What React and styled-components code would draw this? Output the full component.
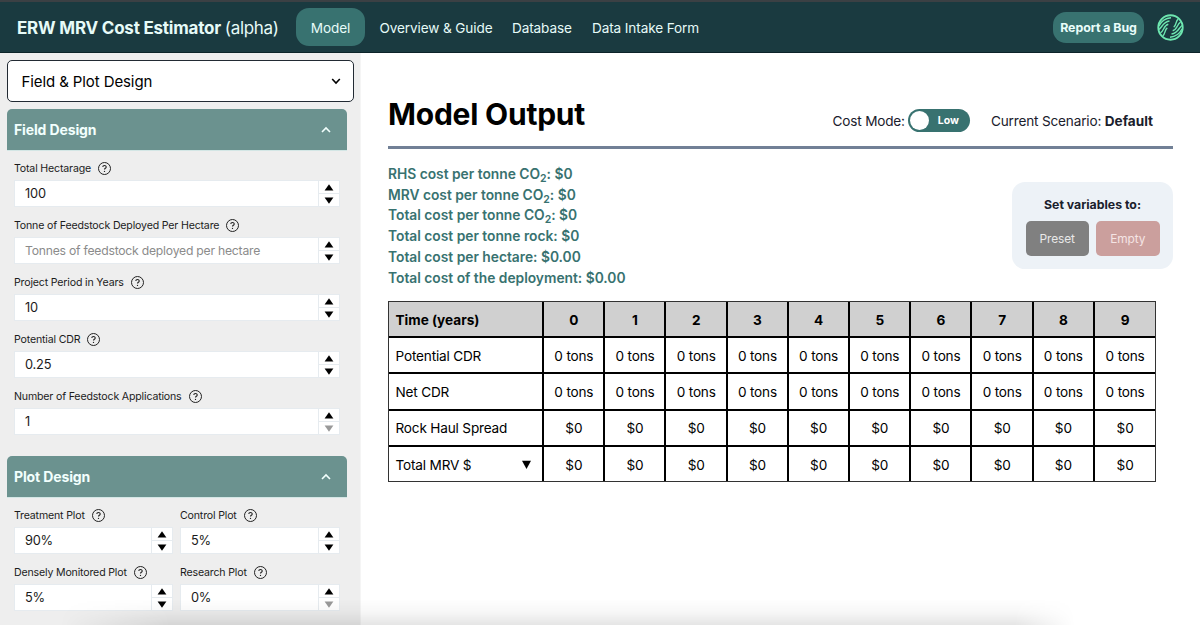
import React from "react";
import styled, { createGlobalStyle } from "styled-components";

const Global = createGlobalStyle`
  *, *::before, *::after { box-sizing: border-box; }
  html, body { margin: 0; padding: 0; }
  body { font-family: Inter, "Liberation Sans", sans-serif; background: #fff; color: #000; overflow: hidden; }
  button, input { font: inherit; letter-spacing: inherit; }
`;

const Page = styled.div`
  position: relative;
  width: 1200px;
  height: 625px;
  overflow: hidden;
  display: flex;
  flex-direction: column;
`;

const Header = styled.header`
  flex: none;
  height: 53px;
  display: flex;
  align-items: center;
  padding: 0 16px 0 17px;
  background: #1a3a40;
  border-top: 2px solid #3b4044;
  border-bottom: 1px solid #0c2429;
  color: #e6fbf8;
`;

const Brand = styled.h1`
  margin: 0 18px 0 0;
  padding-top: 2px;
  width: 261px;
  white-space: nowrap;
  font-size: 17px;
  font-weight: 700;
  letter-spacing: -0.22px;
  span { font-weight: 400; letter-spacing: -0.3px; }
`;

const Nav = styled.nav`
  flex: 1;
  display: flex;
  align-items: center;
`;

const NavLink = styled.a`
  white-space: nowrap;
  font-size: 13.6px;
  line-height: 18px;
  padding-top: 2px;
  letter-spacing: -0.12px;
  width: ${(p) => p.$w}px;
  margin-right: ${(p) => p.$gap}px;
  ${(p) => p.$active && `
    height: 38px;
    display: flex;
    align-items: center;
    justify-content: center;
    border-radius: 13px;
    background: #387270;
  `}
`;

const BugButton = styled.button`
  width: 91px;
  height: 31px;
  padding: 0;
  margin-right: 13px;
  border: 0;
  border-radius: 13px;
  background: #387270;
  color: #e9fdfa;
  font-size: 12.4px;
  font-weight: 700;
  letter-spacing: -0.06px;
  white-space: nowrap;
`;

const Body = styled.div`
  flex: 1;
  display: flex;
  min-height: 0;
`;

const Sidebar = styled.aside`
  flex: none;
  width: 361px;
  padding: 7px 14px 0 7px;
  background: #eee;
  border-right: 1px solid #f5f5f5;
`;

const SectionSelect = styled.div`
  width: 347px;
  height: 42px;
  display: flex;
  align-items: center;
  justify-content: space-between;
  padding: 0 12px 0 13.5px;
  border: 1.5px solid #222a33;
  border-radius: 5px;
  background: #fff;
  font-size: 15px;
  letter-spacing: -0.1px;
`;

const Panel = styled.section`
  width: 340px;
  margin-top: ${(p) => p.$top}px;
`;

const PanelHead = styled.div`
  height: 41px;
  display: flex;
  align-items: center;
  justify-content: space-between;
  padding: 0 16px 0 7px;
  border-radius: 5px 5px 0 0;
  background: #6b928f;
  color: #f2fffd;
  font-size: 14px;
  font-weight: 700;
  letter-spacing: -0.13px;
  box-shadow: 0 1px 0 #d3e6e5;
`;

const Fields = styled.div`
  display: grid;
  grid-template-columns: ${(p) => (p.$two ? "159px 160px" : "326px")};
  column-gap: 7px;
  row-gap: 10px;
  padding: 10px 0 0 7px;
`;

const Field = styled.div`
  height: 47px;
`;

const Label = styled.div`
  height: 17px;
  display: flex;
  align-items: center;
  gap: 7px;
  white-space: nowrap;
  font-size: 10.6px;
  line-height: 16px;
  letter-spacing: -0.17px;
  color: #1c1c1c;
  margin-bottom: 3px;
`;

const NumberBox = styled.div`
  height: 27px;
  display: flex;
  border: 1px solid #e6ebef;
  background: #fff;
`;

const Value = styled.div`
  flex: 1;
  display: flex;
  align-items: center;
  padding: 1px 0 0 10px;
  white-space: nowrap;
  line-height: 16px;
  font-size: ${(p) => (p.$hint ? 12.2 : 12.8)}px;
  letter-spacing: ${(p) => (p.$hint ? -0.23 : -0.2)}px;
  color: ${(p) => (p.$hint ? "#8b8b8b" : "#1a1a1a")};
`;

const Stepper = styled.div`
  width: 21px;
  display: flex;
  flex-direction: column;
  border-left: 1px solid #e6ebef;
`;

const Step = styled.div`
  flex: 1;
  display: flex;
  align-items: center;
  justify-content: center;
  color: ${(p) => (p.$off ? "#999" : "#000")};
  & + & { border-top: 1px solid #e6ebef; }
`;

const Main = styled.main`
  flex: 1;
  padding: 38px 27px 0;
`;

const TitleRow = styled.div`
  width: 785px;
  height: 58px;
  display: flex;
  align-items: flex-start;
  border-bottom: 3px solid #718096;
  color: #1a202c;
`;

const Title = styled.h2`
  margin: 0;
  width: 444.5px;
  padding-top: 5px;
  font-size: 30px;
  line-height: 36px;
  font-weight: 700;
  letter-spacing: -0.22px;
  color: #000;
`;

const TopText = styled.div`
  padding-top: 20px;
  font-size: 13.6px;
  line-height: 20px;
  white-space: nowrap;
  width: ${(p) => p.$w}px;
  letter-spacing: -0.18px;
  b { letter-spacing: 0; }
`;

const Toggle = styled.div`
  width: 62px;
  height: 23px;
  margin: 18px 21px 0 0;
  padding: 0 11px 0 2px;
  display: flex;
  align-items: center;
  justify-content: space-between;
  border-radius: 12px;
  background: #387270;
  color: #fff;
  font-size: 10.5px;
  font-weight: 700;
  &::before {
    content: "";
    width: 19px;
    height: 19px;
    border-radius: 50%;
    background: #fff;
  }
`;

const Summary = styled.div`
  width: 785px;
  height: 152px;
  display: flex;
  justify-content: space-between;
`;

const Costs = styled.div`
  padding-top: 14.75px;
  color: #387270;
  font-size: 13.8px;
  font-weight: 600;
  letter-spacing: -0.01px;
`;

const Cost = styled.div`
  height: 20.75px;
  line-height: 20.75px;
  white-space: nowrap;
  sub { font-size: 10.5px; line-height: 0; vertical-align: -2.5px; }
`;

const Presets = styled.div`
  width: 161px;
  height: 87px;
  margin-top: 33px;
  padding-top: 14px;
  border-radius: 13px;
  background: #edf2f7;
  text-align: center;
  font-size: 12.3px;
  line-height: 18px;
  font-weight: 700;
  color: #1a202c;
`;

const PresetButtons = styled.div`
  display: flex;
  justify-content: center;
  gap: 7px;
  margin-top: 7px;
`;

const PresetButton = styled.button`
  width: 63.5px;
  height: 35px;
  padding: 0;
  border: 0;
  border-radius: 5px;
  background: ${(p) => p.$bg};
  color: ${(p) => p.$fg};
  font-size: 11.9px;
  font-weight: 400;
  letter-spacing: -0.1px;
`;

const Table = styled.div`
  width: 768px;
  border: 1px solid #333;
  display: grid;
  grid-template-columns: 155px repeat(9, 61.2px) 1fr;
  grid-template-rows: repeat(4, 36.2px) 34.5px;
  font-size: 13.6px;
  line-height: 18px;
`;

const Cell = styled.div`
  display: flex;
  align-items: center;
  justify-content: ${(p) => (p.$first ? "space-between" : "center")};
  padding: 1px ${(p) => (p.$first ? 8 : 0)}px 0 ${(p) => (p.$first ? 6.5 : 0.5)}px;
  white-space: nowrap;
  background: ${(p) => (p.$head ? "#d0d0d0" : "#fff")};
  font-weight: ${(p) => (p.$head ? 700 : 400)};
  border-right: ${(p) => (p.$last ? 0 : 2)}px solid #000;
  border-bottom: ${(p) => (p.$bottom ? 0 : 2)}px solid #000;
  letter-spacing: ${(p) => (p.$head ? 0 : -0.18)}px;
`;

const WindowShade = styled.div`
  position: absolute;
  left: 0;
  right: 0;
  bottom: 0;
  height: 26px;
  pointer-events: none;
  background: linear-gradient(to bottom, rgba(0,0,0,0), rgba(0,0,0,0.03) 50%, rgba(0,0,0,0.1));
  mask-image: linear-gradient(to right, transparent 60px, #000 170px, #000 1015px, transparent 1075px);
`;

const Help = () => (
  <svg width="13" height="13" viewBox="0 0 13 13" fill="none" stroke="#222" strokeWidth="1">
    <circle cx="6.5" cy="6.5" r="6" />
    <path d="M4.8 5.1c0-2.200 3.400-2.200 3.400-.1 0 1.300-1.700 1.300-1.700 2.600" strokeWidth="1.1" />
    <circle cx="6.5" cy="9.4" r=".65" fill="#222" stroke="none" />
  </svg>
);

const Chevron = ({ up }) => (
  <svg width="10" height="10" viewBox="0 0 10 10" fill="none" stroke="currentColor" strokeWidth="1.6">
    <path d={up ? "M1 7l4-4 4 4" : "M1.2 3l3.8 4 3.8-4"} />
  </svg>
);

const Arrow = ({ down }) => (
  <svg width="10" height="7" viewBox="0 0 10 7" fill="currentColor">
    <path d={down ? "M.6.5h8.8L5 6.7z" : "M.6 6.5h8.8L5 .3z"} />
  </svg>
);

const Logo = () => (
  <svg width="27" height="27" viewBox="0 0 27 27" fill="none" stroke="#6ee7b0" strokeWidth="1.4">
    <circle cx="13.5" cy="13.5" r="12.2" strokeWidth="1.9" />
    <g id="half">
      <path d="M2 12C4 8 7.500 4.300 14 3.800" />
      <path d="M2 15.500C5 13.500 6 7.800 12.500 7" />
      <path d="M3.500 18.800C7 17 6.500 11.500 11.300 10.300" />
      <path d="M5.800 21.800C8.500 20 7.500 15.500 10.300 13.800" />
    </g>
    <use href="#half" transform="rotate(180 13.5 13.5)" />
  </svg>
);

const NumberField = ({ label, value, hint, off }) => (
  <Field>
    <Label>{label}<Help /></Label>
    <NumberBox>
      <Value $hint={!!hint}>{value || hint}</Value>
      <Stepper>
        <Step><Arrow /></Step>
        <Step $off={off}><Arrow down /></Step>
      </Stepper>
    </NumberBox>
  </Field>
);

const years = Array.from({ length: 10 }, (_, i) => i);
const rows = [
  { name: "Time (years)", cells: years, head: true },
  { name: "Potential CDR", cells: years.map(() => "0 tons") },
  { name: "Net CDR", cells: years.map(() => "0 tons") },
  { name: "Rock Haul Spread", cells: years.map(() => "$0") },
  { name: "Total MRV $", cells: years.map(() => "$0"), open: true },
];

export default function App() {
  return (
    <Page>
      <Global />
      <Header>
        <Brand>ERW MRV Cost Estimator <span>(alpha)</span></Brand>
        <Nav>
          <NavLink $active $w={69} $gap={14.5}>Model</NavLink>
          <NavLink $w={112} $gap={20.5}>Overview &amp; Guide</NavLink>
          <NavLink $w={59} $gap={21}>Database</NavLink>
          <NavLink $w={107} $gap={0}>Data Intake Form</NavLink>
        </Nav>
        <BugButton>Report a Bug</BugButton>
        <Logo />
      </Header>
      <Body>
        <Sidebar>
          <SectionSelect>Field &amp; Plot Design<Chevron /></SectionSelect>
          <Panel $top={7}>
            <PanelHead>Field Design<Chevron up /></PanelHead>
            <Fields>
              <NumberField label="Total Hectarage" value="100" />
              <NumberField label="Tonne of Feedstock Deployed Per Hectare" hint="Tonnes of feedstock deployed per hectare" />
              <NumberField label="Project Period in Years" value="10" />
              <NumberField label="Potential CDR" value="0.25" />
              <NumberField label="Number of Feedstock Applications" value="1" off />
            </Fields>
          </Panel>
          <Panel $top={21}>
            <PanelHead>Plot Design<Chevron up /></PanelHead>
            <Fields $two>
              <NumberField label="Treatment Plot" value="90%" />
              <NumberField label="Control Plot" value="5%" />
              <NumberField label="Densely Monitored Plot" value="5%" />
              <NumberField label="Research Plot" value="0%" off />
            </Fields>
          </Panel>
        </Sidebar>
        <Main>
          <TitleRow>
            <Title>Model Output</Title>
            <TopText $w={75.5}>Cost Mode:</TopText>
            <Toggle>Low</Toggle>
            <TopText $w={163}>Current Scenario: <b>Default</b></TopText>
          </TitleRow>
          <Summary>
            <Costs>
              <Cost>RHS cost per tonne CO<sub>2</sub>: $0</Cost>
              <Cost>MRV cost per tonne CO<sub>2</sub>: $0</Cost>
              <Cost>Total cost per tonne CO<sub>2</sub>: $0</Cost>
              <Cost>Total cost per tonne rock: $0</Cost>
              <Cost>Total cost per hectare: $0.00</Cost>
              <Cost>Total cost of the deployment: $0.00</Cost>
            </Costs>
            <Presets>
              Set variables to:
              <PresetButtons>
                <PresetButton $bg="#808080" $fg="#e8e8e8">Preset</PresetButton>
                <PresetButton $bg="#cb9f9d" $fg="#f5e4e4">Empty</PresetButton>
              </PresetButtons>
            </Presets>
          </Summary>
          <Table>
            {rows.map((r, i) => (
              <React.Fragment key={r.name}>
                <Cell $first $head={r.head} $bottom={i === 4}>
                  {r.name}
                  {r.open && (
                    <svg width="16" height="10" viewBox="0 0 16 10"><path d="M4 .8h9L8.500 9z" /></svg>
                  )}
                </Cell>
                {r.cells.map((c, j) => (
                  <Cell key={j} $head={r.head} $last={j === 9} $bottom={i === 4}>{c}</Cell>
                ))}
              </React.Fragment>
            ))}
          </Table>
        </Main>
      </Body>
      <WindowShade />
    </Page>
  );
}
